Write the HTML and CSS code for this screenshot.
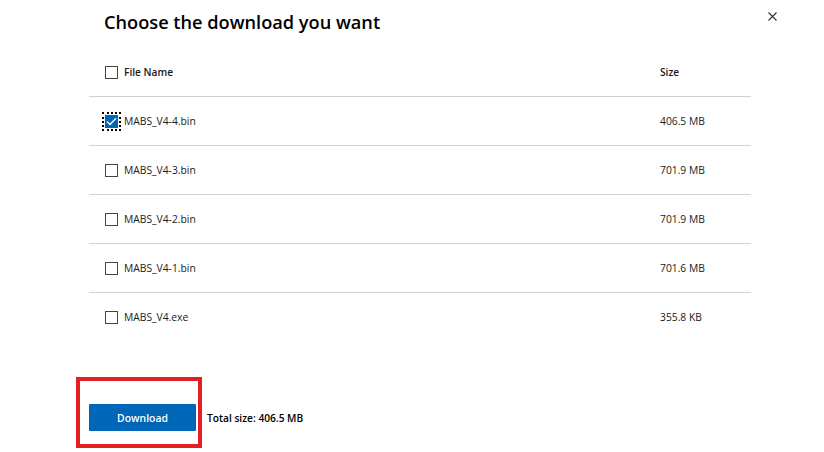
FILE: index.html
```html
<!DOCTYPE html>
<html lang="en">
<head>
<meta charset="utf-8">
<title>Choose the download you want</title>
<link rel="stylesheet" href="styles.css">
</head>
<body>
<div class="dialog">
  <button class="close" aria-label="Close">
    <svg width="9" height="9" viewBox="0 0 9 9"><path d="M0.5 0.5L8.5 8.5M8.5 0.5L0.5 8.5" stroke="#333" stroke-width="1.1" fill="none"/></svg>
  </button>
  <h1 class="title">Choose the download you want</h1>
  <div class="table">
    <div class="row head">
      <div class="cell name"><span class="box"></span><span class="label">File Name</span></div>
      <div class="cell size">Size</div>
    </div>
    <div class="row">
      <div class="cell name"><span class="focus"><span class="box checked"><svg width="11" height="9" viewBox="0 0 11 9"><path d="M1 4.5L4 7.5L10 1.2" stroke="#fff" stroke-width="1.3" fill="none"/></svg></span></span><span class="label">MABS_V4-4.bin</span></div>
      <div class="cell size">406.5 MB</div>
    </div>
    <div class="row">
      <div class="cell name"><span class="box"></span><span class="label">MABS_V4-3.bin</span></div>
      <div class="cell size">701.9 MB</div>
    </div>
    <div class="row">
      <div class="cell name"><span class="box"></span><span class="label">MABS_V4-2.bin</span></div>
      <div class="cell size">701.9 MB</div>
    </div>
    <div class="row">
      <div class="cell name"><span class="box"></span><span class="label">MABS_V4-1.bin</span></div>
      <div class="cell size">701.6 MB</div>
    </div>
    <div class="row">
      <div class="cell name"><span class="box"></span><span class="label">MABS_V4.exe</span></div>
      <div class="cell size">355.8 KB</div>
    </div>
  </div>
  <div class="footer">
    <button class="download">Download</button>
    <span class="total">Total size: 406.5 MB</span>
    <div class="highlight"></div>
  </div>
</div>
</body>
</html>
```

FILE: styles.css
```css
html, body {
  margin: 0;
  padding: 0;
  background: #fff;
}
body {
  font-family: "Open Sans", "Noto Sans", sans-serif;
  color: #1a1a1a;
}
.dialog {
  position: relative;
  width: 824px;
  height: 452px;
  overflow: hidden;
}
.close {
  position: absolute;
  top: 12px;
  left: 768px;
  width: 9px;
  height: 9px;
  padding: 0;
  border: 0;
  background: none;
  display: flex;
}
.title {
  margin: 0 0 14px 104px;
  padding-top: 10px;
  font-size: 18.2px;
  line-height: 24px;
  font-weight: 600;
  color: #000;
}
.table {
  margin-left: 89px;
  width: 662px;
}
.row {
  display: flex;
  align-items: center;
  height: 48px;
  border-top: 1px solid #d2d2d2;
  font-size: 10.3px;
}
.row.head {
  border-top: 0;
  font-weight: 600;
  font-size: 10.2px;
}
.row.head + .row {
  border-top: 1px solid #d2d2d2;
}
.cell.name {
  display: flex;
  align-items: center;
  width: 571px;
  padding-left: 16px;
  box-sizing: border-box;
}
.box {
  width: 13px;
  height: 13px;
  border: 1px solid #444;
  box-sizing: border-box;
  display: flex;
  align-items: center;
  justify-content: center;
  flex: none;
}
.box.checked {
  background: #0067b8;
  border-color: #0067b8;
}
.focus {
  display: flex;
  outline: 2px dotted #000;
  outline-offset: 1px;
}
.label {
  margin-left: 6px;
}
.footer {
  position: relative;
  display: flex;
  align-items: center;
  margin-top: 63px;
  margin-left: 89px;
  height: 27px;
}
.download {
  width: 107px;
  height: 27px;
  border: 0;
  border-radius: 1px;
  background: #0067b8;
  color: #fff;
  font-family: inherit;
  font-size: 10.4px;
  font-weight: 600;
  padding: 0;
}
.total {
  margin-left: 11px;
  font-size: 10.2px;
  font-weight: 600;
  color: #000;
}
.highlight {
  position: absolute;
  left: -13px;
  top: -27px;
  width: 126px;
  height: 71px;
  border: 4px solid #e51d24;
  box-sizing: border-box;
}
```
